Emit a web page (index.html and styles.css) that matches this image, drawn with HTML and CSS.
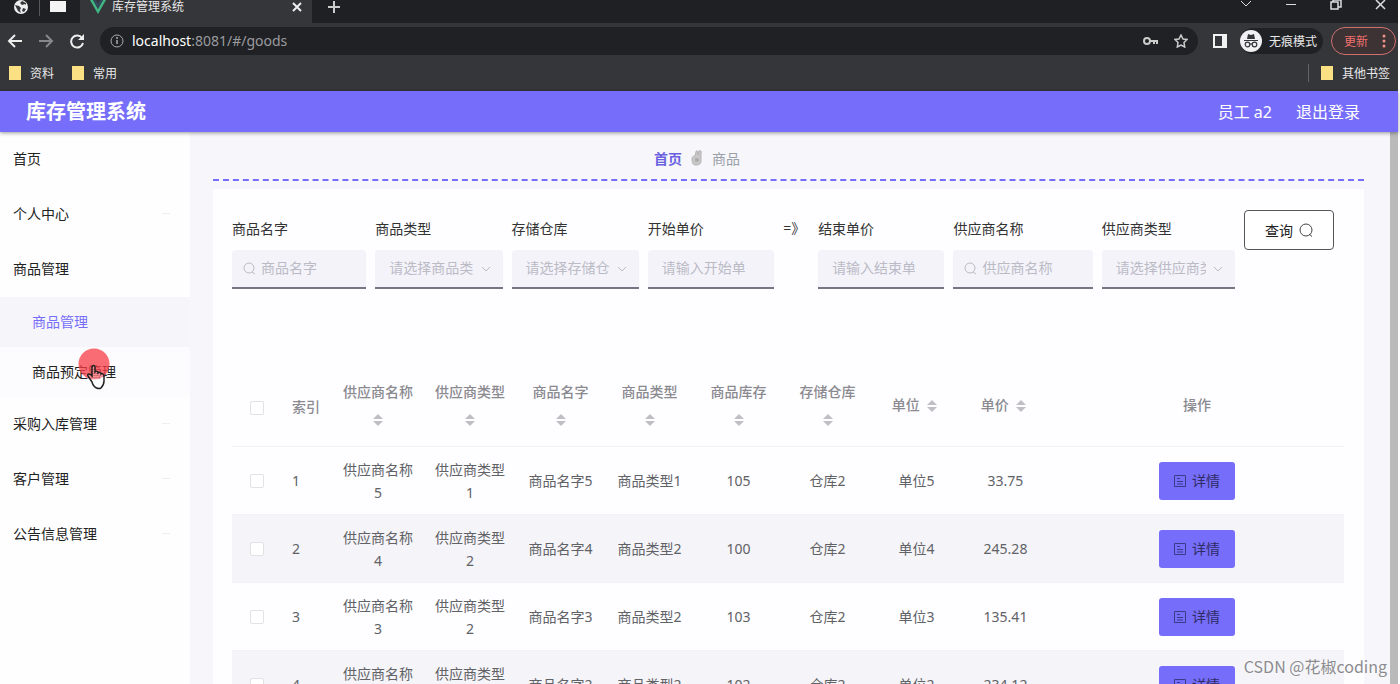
FILE: index.html
```html
<!DOCTYPE html>
<html lang="zh-CN">
<head>
  <meta charset="UTF-8">
  <meta name="viewport" content="width=device-width, initial-scale=1.0">
  <title>库存管理系统</title>
  <link rel="stylesheet" href="styles.css">
</head>
<body>

  <div class="browser">
    <div class="tab-strip">
      <div class="pinned-tabs">
        <svg width="16" height="16" viewBox="0 0 16 16"><circle cx="8" cy="7" r="7" fill="#eee"/><path d="M2 5l4 1 2 2-1 2 1 3-3-2zM9 1L7 3l2 2 3-1 1 1V3zM10 8l3 1-2 3-2-1z" fill="#35363a"/></svg>
        <span class="pin-line"></span>
        <svg width="16" height="16" viewBox="0 0 16 16"><path d="M0 1h16v11H0z" fill="#f4f4f4"/></svg>
      </div>
      <div class="active-tab">
        <svg width="16" height="16" viewBox="0 0 16 16"><path d="M0 1h3l5 9 5-9h3L8 15z" fill="#41b883"/><path d="M3 1h3l2 4 2-4h3L8 10z" fill="#35495e"/></svg>
        <span class="tab-title">库存管理系统</span>
        <svg width="10" height="10" viewBox="0 0 10 10" fill="none" stroke="#eee" stroke-width="2"><path d="M1 1l8 8M9 1L1 9"/></svg>
      </div>
      <svg class="new-tab" width="12" height="12" viewBox="0 0 12 12" fill="none" stroke="#ccc" stroke-width="2"><path d="M6 0v12M0 6h12"/></svg>
      <div class="window-buttons">
        <svg width="12" height="12" viewBox="0 0 12 12" fill="none" stroke="#ddd"><path d="M1 1l5 5 5-5"/></svg>
        <svg width="12" height="12" viewBox="0 0 12 12" fill="none" stroke="#ddd"><path d="M1 4.500h10"/></svg>
        <svg width="12" height="12" viewBox="0 0 12 12" fill="none" stroke="#ddd" stroke-width="1.500"><path d="M1 2h7v7H1zM3 2V0h8v7H8"/></svg>
        <svg width="12" height="12" viewBox="0 0 12 12" fill="none" stroke="#ddd" stroke-width="1.500"><path d="M1 0l9 9M10 0L1 9"/></svg>
      </div>
    </div>

    <div class="toolbar">
      <svg width="16" height="16" viewBox="0 0 16 16" fill="none" stroke="#eee" stroke-width="2"><path d="M15 8H2M8 2L2 8l6 6"/></svg>
      <svg width="16" height="16" viewBox="0 0 16 16" fill="none" stroke="#87888b" stroke-width="2"><path d="M1 8h13M8 2l6 6-6 6"/></svg>
      <svg width="16" height="16" viewBox="0 0 16 16" fill="none" stroke="#eee" stroke-width="2"><path d="M13 5a6 6 0 1 0 1 5"/><path d="M15 1v6H9z" fill="#eee" stroke="none"/></svg>
      <div class="address">
        <svg width="14" height="14" viewBox="0 0 14 14" fill="none" stroke="#aaa"><circle cx="7" cy="7" r="6"/><path d="M7 6v4M7 3v2" stroke-width="1.500"/></svg>
        <span class="url"><b>localhost</b>:8081/#/goods</span>
        <svg width="16" height="12" viewBox="0 0 16 12" fill="none" stroke="#ccc" stroke-width="2"><circle cx="5" cy="6" r="3"/><path d="M8 6h7v3M12 6v3"/></svg>
        <svg width="14" height="14" viewBox="0 0 14 14" fill="none" stroke="#ccc" stroke-width="1.500"><path d="M7 1l2 4 4 .5-3 3 .7 4.500L7 11l-3.700 2L4 8.500l-3-3L5 5z"/></svg>
      </div>
      <svg width="14" height="14" viewBox="0 0 14 14"><path d="M1 1h12v12H1z" fill="none" stroke="#f2f2f2" stroke-width="2"/><path d="M9 1h4v12H9z" fill="#f2f2f2"/></svg>
      <div class="incognito">
        <svg width="22" height="22" viewBox="0 0 22 22"><circle cx="11" cy="11" r="11" fill="#f1f1f3"/><path d="M8 4l3 1 3-1 1 5H7zM4 10h14v1H4z" fill="#35363a"/><g fill="none" stroke="#35363a" stroke-width="1.200"><circle cx="7.500" cy="14.500" r="2.300"/><circle cx="14.500" cy="14.500" r="2.300"/><path d="M9.500 14h3"/></g></svg>
        <span>无痕模式</span>
      </div>
      <button class="update">更新 <svg width="4" height="14" viewBox="0 0 4 14" fill="#f0908a"><circle cx="2" cy="2" r="1.500"/><circle cx="2" cy="7" r="1.500"/><circle cx="2" cy="12" r="1.500"/></svg></button>
    </div>

    <div class="bookmarks">
      <a href="#"><i class="folder"></i>资料</a>
      <a href="#"><i class="folder"></i>常用</a>
      <a href="#" class="other"><i class="folder"></i>其他书签</a>
    </div>
  </div>

  <header>
    <h1>库存管理系统</h1>
    <a href="#">员工 a2</a>
    <a href="#">退出登录</a>
  </header>

  <div class="layout">
    <aside>
      <ul class="menu">
        <li><a href="#">首页</a></li>
        <li><a href="#">个人中心<span class="fold"></span></a></li>
        <li>
          <a href="#">商品管理</a>
          <ul class="submenu">
            <li class="active"><a href="#">商品管理</a></li>
            <li><a href="#">商品预定管理</a>
              <svg class="pointer" width="34" height="42" viewBox="0 0 34 42"><circle cx="17" cy="16" r="15.500" fill="#fa3c46" fill-opacity=".75"/><path d="M15 34l-4-6c-1-2 1-3 3-1l1 1v-9c0-2 3-2 3 0v5c1-1 3-1 3 1 1-1 3-1 3 1 1-1 3 0 3 2v5c0 3-1 5-3 7-2 1-7 1-9-6z" fill="#fff" fill-opacity=".25" stroke="#222" stroke-width="1.500"/></svg>
            </li>
          </ul>
        </li>
        <li><a href="#">采购入库管理<span class="fold"></span></a></li>
        <li><a href="#">客户管理<span class="fold"></span></a></li>
        <li><a href="#">公告信息管理<span class="fold"></span></a></li>
      </ul>
    </aside>

    <main>
      <nav class="breadcrumb">
        <a href="#">首页</a>
        <svg width="12" height="16" viewBox="0 0 12 16"><path d="M1 9c0-2 1-3 3-3l1-4c0-2 2-1 2 0v3l1-4c1-1 3 0 2 2v8c0 3-2 4-5 4s-4-2-4-6z" fill="#c9c7c7" stroke="#b5b3b3"/><path d="M4 9h3v2H4" fill="none" stroke="#999"/></svg>
        <span>商品</span>
      </nav>

      <section class="content">
        <form class="search">
          <div class="field">
            <label for="name">商品名字</label>
            <div class="control">
              <svg class="lens" width="13" height="13" viewBox="0 0 13 13"><circle cx="6" cy="6" r="5"/><path d="M9 10l3 2"/></svg>
              <input class="with-icon" id="name" type="text" placeholder="商品名字">
            </div>
          </div>
          <div class="field">
            <label for="type">商品类型</label>
            <div class="control">
              <select id="type"><option>请选择商品类型</option></select>
              <svg class="arrow" width="10" height="6" viewBox="0 0 10 6"><path d="M1 1l4 4 4-4"/></svg>
            </div>
          </div>
          <div class="field">
            <label for="depot">存储仓库</label>
            <div class="control">
              <select id="depot"><option>请选择存储仓库</option></select>
              <svg class="arrow" width="10" height="6" viewBox="0 0 10 6"><path d="M1 1l4 4 4-4"/></svg>
            </div>
          </div>
          <div class="field">
            <label for="min">开始单价</label>
            <div class="control"><input id="min" type="text" placeholder="请输入开始单价"></div>
          </div>
          <span class="to">=》</span>
          <div class="field">
            <label for="max">结束单价</label>
            <div class="control"><input id="max" type="text" placeholder="请输入结束单价"></div>
          </div>
          <div class="field">
            <label for="supplier">供应商名称</label>
            <div class="control">
              <svg class="lens" width="13" height="13" viewBox="0 0 13 13"><circle cx="6" cy="6" r="5"/><path d="M9 10l3 2"/></svg>
              <input class="with-icon" id="supplier" type="text" placeholder="供应商名称">
            </div>
          </div>
          <div class="field">
            <label for="supplier-type">供应商类型</label>
            <div class="control">
              <select id="supplier-type"><option>请选择供应商类型</option></select>
              <svg class="arrow" width="10" height="6" viewBox="0 0 10 6"><path d="M1 1l4 4 4-4"/></svg>
            </div>
          </div>
          <button class="query" type="button">查询 <svg width="14" height="14" viewBox="0 0 14 14" fill="none" stroke="#444"><circle cx="7" cy="7" r="6"/><path d="M10 11l3 2.500"/></svg></button>
        </form>

        <table>
          <colgroup>
            <col class="c-check"><col class="c-index">
            <col class="c-supplier"><col class="c-supplier">
            <col class="c-data"><col class="c-data"><col class="c-data">
            <col class="c-data"><col class="c-data"><col class="c-data">
            <col>
          </colgroup>
          <thead>
            <tr>
              <th class="check"><input type="checkbox" aria-label="全选"></th>
              <th class="index">索引</th>
              <th>供应商名称 <i class="sort"></i></th>
              <th>供应商类型 <i class="sort"></i></th>
              <th>商品名字 <i class="sort"></i></th>
              <th>商品类型 <i class="sort"></i></th>
              <th>商品库存 <i class="sort"></i></th>
              <th>存储仓库 <i class="sort"></i></th>
              <th>单位 <i class="sort"></i></th>
              <th>单价 <i class="sort"></i></th>
              <th>操作</th>
            </tr>
          </thead>
          <tbody id="goods"></tbody>
        </table>
      </section>
    </main>
    <div class="scrollbar"></div>
  </div>

  <div class="watermark">CSDN @花椒coding</div>

  <script>
    const goods = [
      ['供应商名称5', '供应商类型1', '商品名字5', '商品类型1', 105, '仓库2', '单位5', '33.75'],
      ['供应商名称4', '供应商类型2', '商品名字4', '商品类型2', 100, '仓库2', '单位4', '245.28'],
      ['供应商名称3', '供应商类型2', '商品名字3', '商品类型2', 103, '仓库2', '单位3', '135.41'],
      ['供应商名称2', '供应商类型2', '商品名字2', '商品类型2', 102, '仓库2', '单位2', '234.12']
    ];

    document.getElementById('goods').innerHTML = goods.map((row, i) => `
      <tr>
        <td class="check"><input type="checkbox" aria-label="选择第${i + 1}行"></td>
        <td class="index">${i + 1}</td>
        ${row.map(v => `<td>${v}</td>`).join('')}
        <td><button class="detail" type="button">
          <svg width="12" height="14" viewBox="0 0 12 14" fill="none" stroke="#3d3a86"><path d="M.5 1.500h11v11H.5zM3 4.500h3M3 7.500h6M3 10h6"/></svg>
          详情</button></td>
      </tr>`).join('');
  </script>

</body>
</html>
```
FILE: styles.css
```css
* {
  box-sizing: border-box;
}

body {
  margin: 0;
  height: 100vh;
  padding-right: 2px;
  overflow: hidden;
  display: flex;
  flex-direction: column;
  position: relative;
  font-family: "Noto Sans", "Noto Sans CJK SC", sans-serif;
  font-size: 14px;
  color: #333;
  background: #fff;
}

a {
  color: inherit;
  text-decoration: none;
}

ul {
  list-style: none;
  margin: 0;
  padding: 0;
}

button, input, select {
  font: inherit;
}

svg {
  flex: none;
}

/* browser */
.browser {
  flex: none;
  background: #35363a;
  color: #e8e8e8;
  font-size: 12px;
}

.tab-strip {
  display: flex;
  height: 23px;
  background: #1f2024;
}

.tab-strip svg {
  display: block;
}

.pinned-tabs {
  display: flex;
  gap: 10px;
  width: 80px;
  padding-left: 13px;
}

.pin-line {
  width: 1px;
  height: 16px;
  background: #55565a;
}

.active-tab {
  display: flex;
  align-items: center;
  width: 232px;
  padding: 0 10px 9px;
  background: #35363a;
}

.tab-title {
  flex: 1;
  margin-left: 6px;
  line-height: 14px;
}

.new-tab {
  margin: 1px 0 0 16px;
}

.window-buttons {
  display: flex;
  gap: 33px;
  margin-left: auto;
  padding-right: 11px;
}

.toolbar {
  display: flex;
  align-items: center;
  gap: 15px;
  height: 36px;
  padding: 0 2px 0 7px;
}

.address {
  flex: 1;
  display: flex;
  align-items: center;
  gap: 16px;
  height: 28px;
  padding: 0 10px;
  border-radius: 14px;
  background: #202125;
}

.url {
  flex: 1;
  margin-left: -8px;
  padding-bottom: 2px;
  font-size: 14px;
  color: #9a9b9e;
}

.url b {
  font-weight: normal;
  color: #fff;
}

.incognito {
  display: flex;
  align-items: center;
  gap: 7px;
  height: 26px;
  margin-left: -2px;
  padding-right: 6px;
  border-radius: 13px;
  background: #202125;
}

.update {
  display: flex;
  align-items: center;
  justify-content: space-between;
  width: 65px;
  height: 28px;
  margin-left: -7px;
  padding: 0 9px 0 12px;
  border: 1px solid #d0716f;
  border-radius: 14px;
  background: #3d3335;
  color: #f0706c;
}

.bookmarks {
  display: flex;
  align-items: center;
  gap: 18px;
  height: 32px;
  padding: 0 8px 4px 9px;
}

.bookmarks a {
  display: flex;
  align-items: center;
  gap: 9px;
}

.folder {
  width: 12px;
  height: 14px;
  background: #fbe184;
}

.bookmarks .other {
  margin-left: auto;
  padding-left: 12px;
  border-left: 1px solid #626367;
}

/* top bar */
header {
  flex: none;
  display: flex;
  align-items: center;
  gap: 24px;
  height: 41px;
  padding: 0 38px 2px 26px;
  background: #766efa;
  color: #fff;
  font-size: 16px;
  box-shadow: 0 1px 4px rgba(0,0,0,0.4);
  z-index: 1;
}

header h1 {
  flex: 1;
  margin: 0;
  font-size: 20px;
}

.layout {
  flex: 1;
  display: flex;
  min-height: 0;
}

/* side menu */
aside {
  flex: none;
  width: 190px;
  background: #fefefe;
  color: #222;
}

.menu a {
  display: flex;
  align-items: center;
  justify-content: space-between;
  height: 55px;
  padding: 0 20px 3px 13px;
}

.fold {
  width: 8px;
  height: 1px;
  background: #f0eef2;
}

.submenu li {
  position: relative;
  background: #fcfbfd;
}

.menu .submenu a {
  height: 50px;
  padding-left: 32px;
}

.submenu .active {
  background: #f6f5f9;
  color: #766efa;
}

.pointer {
  position: absolute;
  left: 77px;
  top: 1px;
}

/* main */
main {
  flex: 1;
  min-width: 0;
  padding: 0 26px 0 23px;
  background: #f7f6fa;
}

.breadcrumb {
  display: flex;
  align-items: center;
  gap: 9px;
  height: 49px;
  padding: 5px 0 0 441px;
  border-bottom: 2px dashed #766efa;
  color: #99a0aa;
}

.breadcrumb a {
  color: #6a61e0;
  font-weight: bold;
}

.content {
  height: 600px;
  margin-top: 8px;
  padding: 21px 20px 0 19px;
  background: #fefdff;
}

.search {
  display: grid;
  grid-template-columns: 134fr 127fr 127fr 126fr 26px 126fr 139fr 133fr 90px;
  gap: 9px;
  align-items: start;
  padding-right: 10px;
}

.field label {
  display: block;
  height: 40px;
  line-height: 38px;
}

.control {
  position: relative;
}

.control input, .control select {
  display: block;
  width: 100%;
  height: 39px;
  padding: 0 29px 2px 14px;
  border: 0;
  border-bottom: 2px solid #777583;
  border-radius: 4px 4px 0 0;
  background: #f4f3fa;
  color: #bbbbc6;
  appearance: none;
  outline: none;
}

.control .with-icon {
  padding: 0 10px 2px 29px;
}

.control ::placeholder {
  color: #bbbbc6;
}

.lens, .arrow {
  position: absolute;
  top: 12px;
  left: 11px;
  fill: none;
  stroke: #bbbbc6;
}

.arrow {
  top: 16px;
  left: auto;
  right: 12px;
}

.to {
  line-height: 36px;
  white-space: nowrap;
}

.query {
  display: flex;
  align-items: center;
  justify-content: center;
  gap: 6px;
  height: 40px;
  padding: 0;
  border: 1px solid #555;
  border-radius: 4px;
  background: #fff;
  color: #222;
}

table {
  width: 100%;
  margin-top: 80px;
  table-layout: fixed;
  border-collapse: separate;
  border-spacing: 0;
  color: #606266;
}

.c-check, .c-index {
  width: 50px;
}

.c-supplier {
  width: 92px;
}

.c-data {
  width: 89px;
}

th, td {
  height: 68px;
  padding: 0 10px;
  border-bottom: 1px solid #f3f2f5;
  line-height: 23px;
  text-align: center;
  word-break: break-word;
}

th {
  height: 78px;
  padding-bottom: 6px;
  color: #8a8a90;
  font-weight: 500;
  line-height: 27px;
}

tbody tr:nth-child(even) {
  background: #f5f4f8;
}

.check {
  padding: 0;
}

th.index {
  padding-bottom: 2px;
}

.index {
  text-align: left;
}

table input {
  display: block;
  appearance: none;
  width: 14px;
  height: 14px;
  margin: 0 auto;
  border: 1px solid #e2e1e6;
  border-radius: 2px;
  background: #fff;
}

.sort {
  display: inline-flex;
  flex-direction: column;
  gap: 2px;
  margin: 0 4px;
  vertical-align: middle;
}

.sort::before, .sort::after {
  content: "";
  border: 5px solid transparent;
  border-top: 0;
  border-bottom-color: #c0c0c4;
}

.sort::after {
  border-top: 5px solid #c0c0c4;
  border-bottom: 0;
}

.detail {
  display: inline-flex;
  align-items: center;
  justify-content: center;
  gap: 6px;
  width: 76px;
  height: 38px;
  padding: 0;
  border: 0;
  border-radius: 3px;
  background: #766efa;
  color: #2f2c66;
  vertical-align: middle;
}

.scrollbar {
  flex: none;
  width: 8px;
  background: #bababa;
}

.watermark {
  position: absolute;
  right: 13px;
  bottom: 6px;
  z-index: 2;
  font-family: "Noto Sans CJK SC", sans-serif;
  font-size: 16px;
  line-height: 24px;
  color: #8c8c90;
  text-shadow: 0 0 2px #fff;
}
```
